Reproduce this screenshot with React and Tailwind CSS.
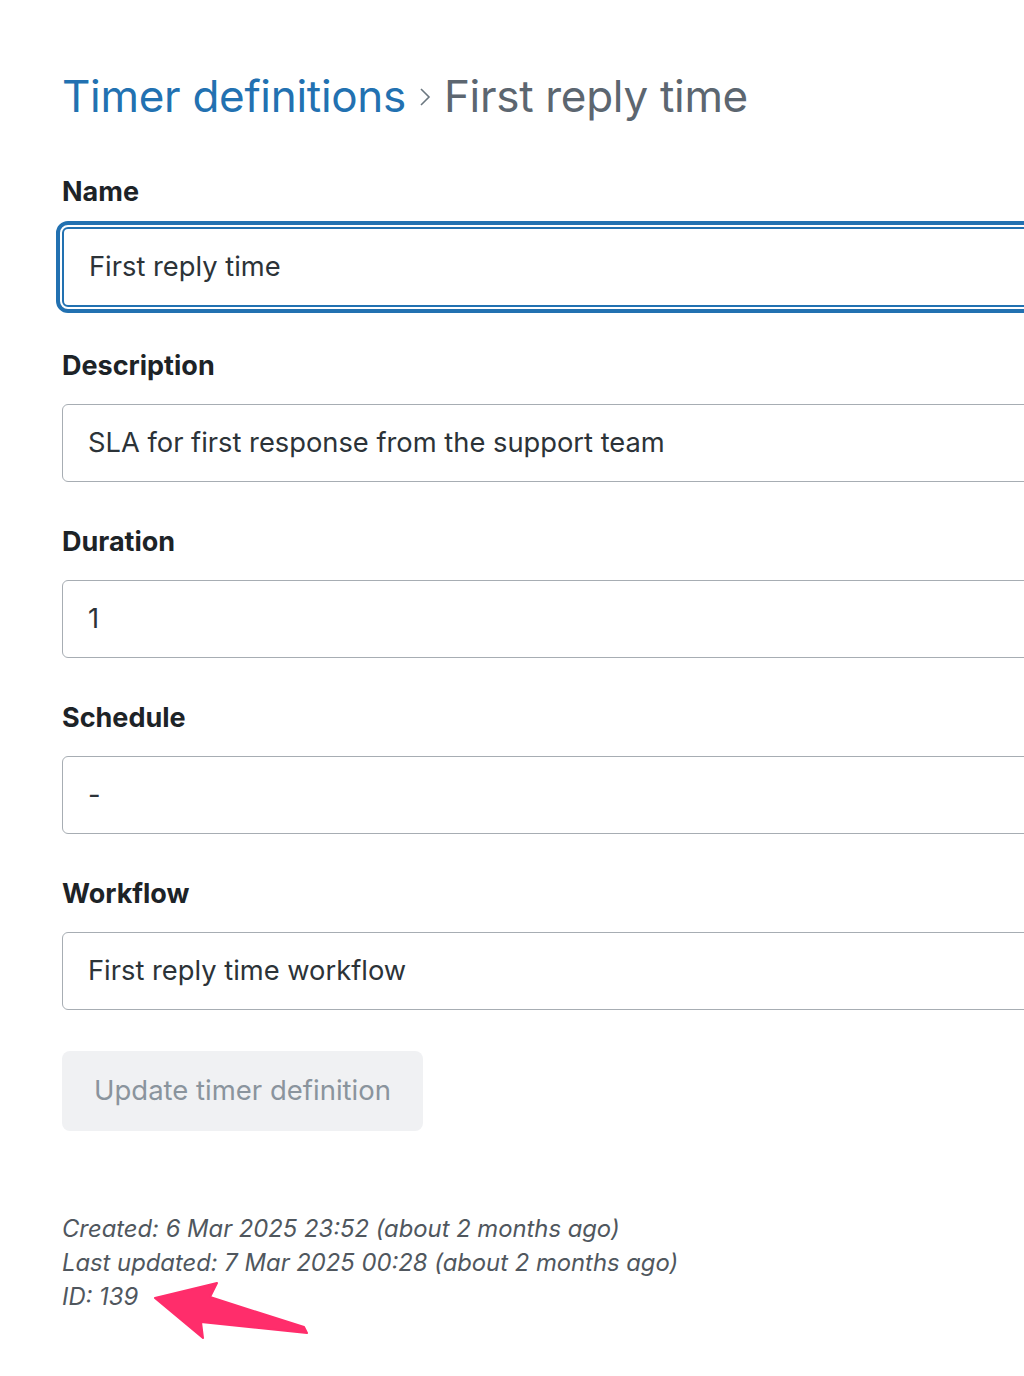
import React from "react";

const fields = [
  { label: "Description", value: "SLA for first response from the support team" },
  { label: "Duration", value: "1" },
  { label: "Schedule", value: "-" },
  { label: "Workflow", value: "First reply time workflow" },
];

function Arrow() {
  // pink annotation arrow pointing at the ID line
  return (
    <svg
      className="absolute left-0 top-0 pointer-events-none"
      width="1024"
      height="1376"
      viewBox="0 0 1024 1376"
    >
      <polygon
        points="155,1298 217,1283 210,1297 304,1327 307,1333 201,1322 203,1338"
        fill="#ff2d6b"
        stroke="#ff2d6b"
        strokeWidth="2"
        strokeLinejoin="round"
      />
    </svg>
  );
}

export default function App() {
  return (
    <div
      className="relative w-[1024px] h-[1376px] overflow-hidden bg-white"
      style={{ fontFamily: "Inter, 'Noto Sans', sans-serif" }}
    >
      <div className="pl-[62px] pt-[68px]">
        {/* breadcrumb heading */}
        <h1 className="flex items-center h-[56px] text-[44px] leading-[56px] tracking-[-0.3px]">
          <span className="text-[#2271b1]">Timer definitions</span>
          <svg className="mx-[13px] mt-[2px]" width="12" height="20" viewBox="0 0 12 20">
            <polyline points="2,2 10,10 2,18" fill="none" stroke="#6b7780" strokeWidth="1.6" />
          </svg>
          <span className="text-[#5c6670]">First reply time</span>
        </h1>

        {/* Name (focused) */}
        <div className="mt-[53px]">
          <label className="block h-[30px] text-[27px] leading-[30px] font-bold text-[#1d2327]">
            Name
          </label>
          <div className="mt-[20px] w-[1000px] h-[80px] rounded-[6px] border-2 border-[#2271b1] outline-4 outline-offset-2 outline-[#2271b1] flex items-center pl-[25px] text-[27.3px] text-[#2c3338]">
            First reply time
          </div>
        </div>

        {fields.map((f, i) => (
          <div key={f.label} className={i === 0 ? "mt-[44px]" : "mt-[45px]"}>
            <label className="block h-[30px] text-[27px] leading-[30px] font-bold text-[#1d2327]">
              {f.label}
            </label>
            <div className="mt-[23px] w-[1000px] h-[78px] rounded-[6px] border-[1.5px] border-[#a7adb3] flex items-center pl-[25px] text-[27.3px] text-[#2c3338]">
              {f.value}
            </div>
          </div>
        ))}

        <button
          disabled
          className="mt-[41px] w-[361px] h-[80px] rounded-[8px] bg-[#f0f1f3] text-[27.5px] text-[#8a949d] flex items-center justify-center"
        >
          Update timer definition
        </button>

        <div className="mt-[81px] text-[23.8px] leading-[34px] italic text-[#50575e]">
          <div>Created: 6 Mar 2025 23:52 (about 2 months ago)</div>
          <div>Last updated: 7 Mar 2025 00:28 (about 2 months ago)</div>
          <div>ID: 139</div>
        </div>
      </div>
      <Arrow />
    </div>
  );
}
